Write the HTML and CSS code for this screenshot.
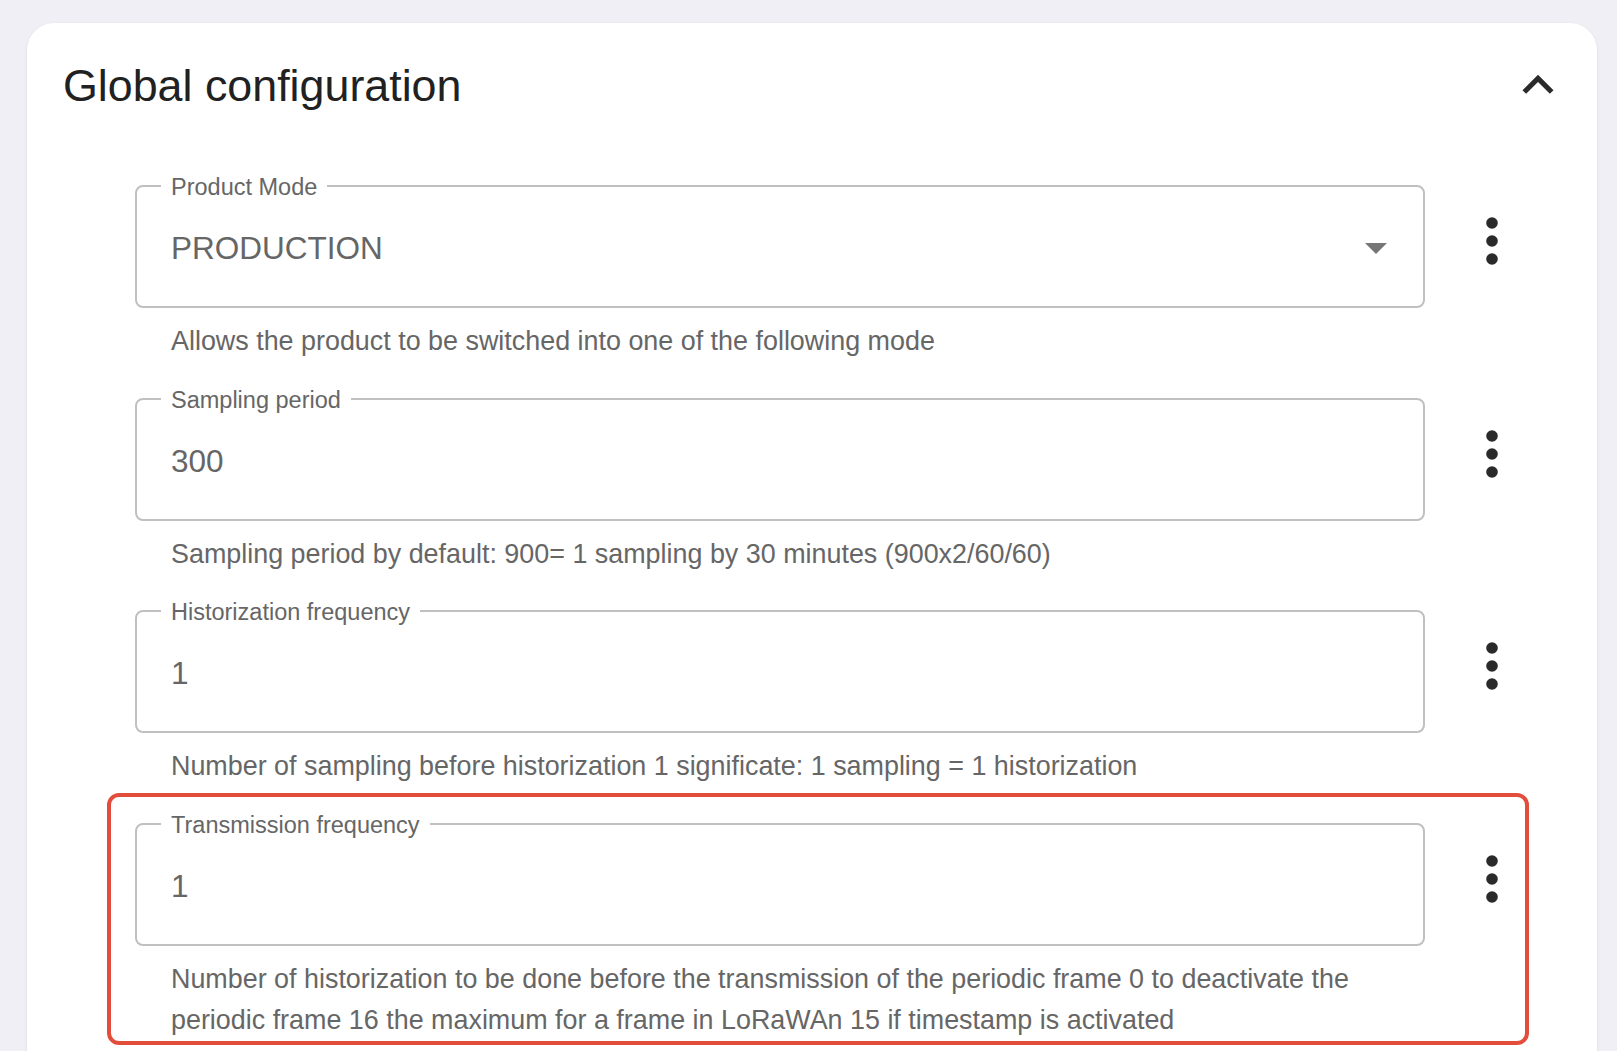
FILE: index.html
```html
<!DOCTYPE html>
<html lang="en">
<head>
<meta charset="utf-8">
<title>Global configuration</title>
<link rel="stylesheet" href="styles.css">
</head>
<body>
<section class="card">
  <header class="card-header">
    <h2 class="card-title">Global configuration</h2>
    <svg class="chevron" viewBox="0 0 24 24" aria-hidden="true"><path d="M12 8l-6 6 1.41 1.41L12 10.83l4.59 4.58L18 14z"/></svg>
  </header>
  <div class="fields">
    <div class="row">
      <div class="field">
        <div class="box">
          <span class="label">Product Mode</span>
          <span class="value">PRODUCTION</span>
          <svg class="dropdown" viewBox="7 10 10 5" aria-hidden="true"><path d="M7 10l5 5 5-5z"/></svg>
        </div>
        <p class="helper">Allows the product to be switched into one of the following mode</p>
      </div>
      <svg class="kebab" viewBox="0 0 24 60" aria-hidden="true"><circle cx="12" cy="12" r="5.8"/><circle cx="12" cy="30" r="5.8"/><circle cx="12" cy="48" r="5.8"/></svg>
    </div>
    <div class="row">
      <div class="field">
        <div class="box">
          <span class="label">Sampling period</span>
          <span class="value">300</span>
        </div>
        <p class="helper">Sampling period by default: 900= 1 sampling by 30 minutes (900x2/60/60)</p>
      </div>
      <svg class="kebab" viewBox="0 0 24 60" aria-hidden="true"><circle cx="12" cy="12" r="5.8"/><circle cx="12" cy="30" r="5.8"/><circle cx="12" cy="48" r="5.8"/></svg>
    </div>
    <div class="row">
      <div class="field">
        <div class="box">
          <span class="label">Historization frequency</span>
          <span class="value">1</span>
        </div>
        <p class="helper">Number of sampling before historization 1 significate: 1 sampling = 1 historization</p>
      </div>
      <svg class="kebab" viewBox="0 0 24 60" aria-hidden="true"><circle cx="12" cy="12" r="5.8"/><circle cx="12" cy="30" r="5.8"/><circle cx="12" cy="48" r="5.8"/></svg>
    </div>
    <div class="row highlighted">
      <div class="field">
        <div class="box">
          <span class="label">Transmission frequency</span>
          <span class="value">1</span>
        </div>
        <p class="helper">Number of historization to be done before the transmission of the periodic frame 0 to deactivate the periodic frame 16 the maximum for a frame in LoRaWAn 15 if timestamp is activated</p>
      </div>
      <svg class="kebab" viewBox="0 0 24 60" aria-hidden="true"><circle cx="12" cy="12" r="5.8"/><circle cx="12" cy="30" r="5.8"/><circle cx="12" cy="48" r="5.8"/></svg>
    </div>
  </div>
</section>
</body>
</html>
```

FILE: styles.css
```css
* { box-sizing: border-box; }

html, body {
  margin: 0;
  padding: 0;
  height: 100%;
  overflow: hidden;
}

body {
  background: #efeff5;
  font-family: "Liberation Sans", Arial, sans-serif;
  padding: 23px 20px 0 27px;
}

.card {
  background: #ffffff;
  width: 1570px;
  border-radius: 27px;
  box-shadow: 0 1px 3px rgba(0, 0, 0, 0.10);
  padding: 31px 0 200px 0;
}

.card-header {
  display: flex;
  align-items: center;
  justify-content: space-between;
  height: 62px;
  padding: 0 28px 0 36px;
}

.card-title {
  margin: 0;
  font-weight: 400;
  font-size: 44.8px;
  line-height: 62px;
  color: #212121;
}

.chevron {
  width: 62px;
  height: 62px;
  fill: #2b2b2b;
}

.fields {
  display: flex;
  flex-direction: column;
  gap: 1.5px;
  margin-top: 39px;
  padding: 0 68px 0 80px;
}

.row {
  display: flex;
  align-items: flex-start;
  border: 4px solid transparent;
  border-radius: 12px;
  padding: 26px 21px 0 24px;
}

.row.highlighted {
  border-color: #e24e3b;
}

.field {
  flex: 1;
  min-width: 0;
}

.box {
  position: relative;
  display: flex;
  align-items: center;
  height: 123px;
  border: 2px solid #c0c0c0;
  border-radius: 8px;
  padding: 4px 32px 0 34px;
}

.label {
  position: absolute;
  left: 24px;
  top: 1px;
  transform: translateY(-50%);
  padding: 0 10px;
  background: #ffffff;
  font-size: 23.5px;
  line-height: 1;
  color: #666666;
  white-space: nowrap;
}

.value {
  flex: 1;
  font-size: 31.5px;
  color: #666666;
}

.dropdown {
  width: 22px;
  height: 11px;
  margin-right: 4px;
  fill: #767676;
}

.helper {
  margin: 13px 34px 0 36px;
  font-size: 26.9px;
  line-height: 41px;
  color: #666666;
}

.kebab {
  width: 24px;
  height: 60px;
  margin: 26px 0 0 55px;
  fill: #2a2a2a;
  flex: none;
}
```
